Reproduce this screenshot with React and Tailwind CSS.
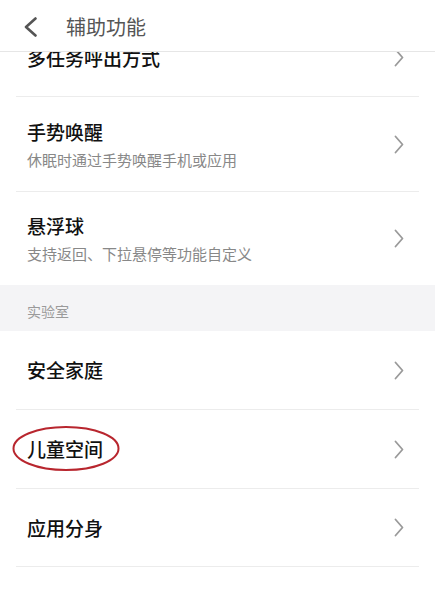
import React from "react";

const font = { fontFamily: '"Noto Sans CJK SC", "Noto Sans", sans-serif' };

function Chevron() {
  return (
    <svg width="10" height="19" viewBox="0 0 10 19" className="shrink-0">
      <polyline points="1.5,1.5 8.5,9.5 1.5,17.5" fill="none" stroke="#9a9a9a" strokeWidth="1.8" strokeLinecap="round" strokeLinejoin="round" />
    </svg>
  );
}

function Divider() {
  return <div className="mx-4 h-px bg-[#ececec]" />;
}

function Row({ title, sub, h = "h-[78px]", circled }) {
  return (
    <div className={`relative flex items-center justify-between pl-[27px] pr-[31px] ${h}`}>
      <div className="flex flex-col">
        <div className="text-[19px] leading-[26px] font-medium text-[#111]">{title}</div>
        {sub && <div className="mt-[5px] text-[15px] leading-[20px] text-[#888]">{sub}</div>}
      </div>
      <Chevron />
      {circled && (
        <svg className="absolute left-[12px] top-[15px]" width="108" height="47" viewBox="0 0 108 47">
          <ellipse cx="54" cy="23.5" rx="52.5" ry="21.5" fill="none" stroke="#b8262e" strokeWidth="2" />
        </svg>
      )}
    </div>
  );
}

export default function App() {
  return (
    <div className="w-[435px] h-[597px] overflow-hidden bg-white flex flex-col" style={font}>
      <div className="h-[52px] shrink-0 flex items-center pt-[3px] border-b border-[#e6e6e6] relative z-10 bg-white">
        <svg className="ml-[24px]" width="14" height="20" viewBox="0 0 14 20">
          <polyline points="11.5,1.5 2,10 11.5,18.5" fill="none" stroke="#555" strokeWidth="2.6" strokeLinecap="round" strokeLinejoin="round" />
        </svg>
        <div className="ml-[28px] text-[20px] text-[#555]">辅助功能</div>
      </div>
      <div className="flex-1 overflow-hidden">
        <div className="mt-[-33px]">
          <Row title="多任务呼出方式" h="h-[77px]" />
          <Divider />
          <Row title="手势唤醒" sub="休眠时通过手势唤醒手机或应用" h="h-[94px]" />
          <Divider />
          <Row title="悬浮球" sub="支持返回、下拉悬停等功能自定义" h="h-[93px]" />
          <div className="h-[46px] bg-[#f4f4f6] flex items-center pt-[7px] pl-[27px] text-[14px] text-[#9a9a9a]">实验室</div>
          <Row title="安全家庭" />
          <Divider />
          <Row title="儿童空间" circled />
          <Divider />
          <Row title="应用分身" h="h-[77px]" />
          <Divider />
          <Row title="游戏模式" />
        </div>
      </div>
    </div>
  );
}
